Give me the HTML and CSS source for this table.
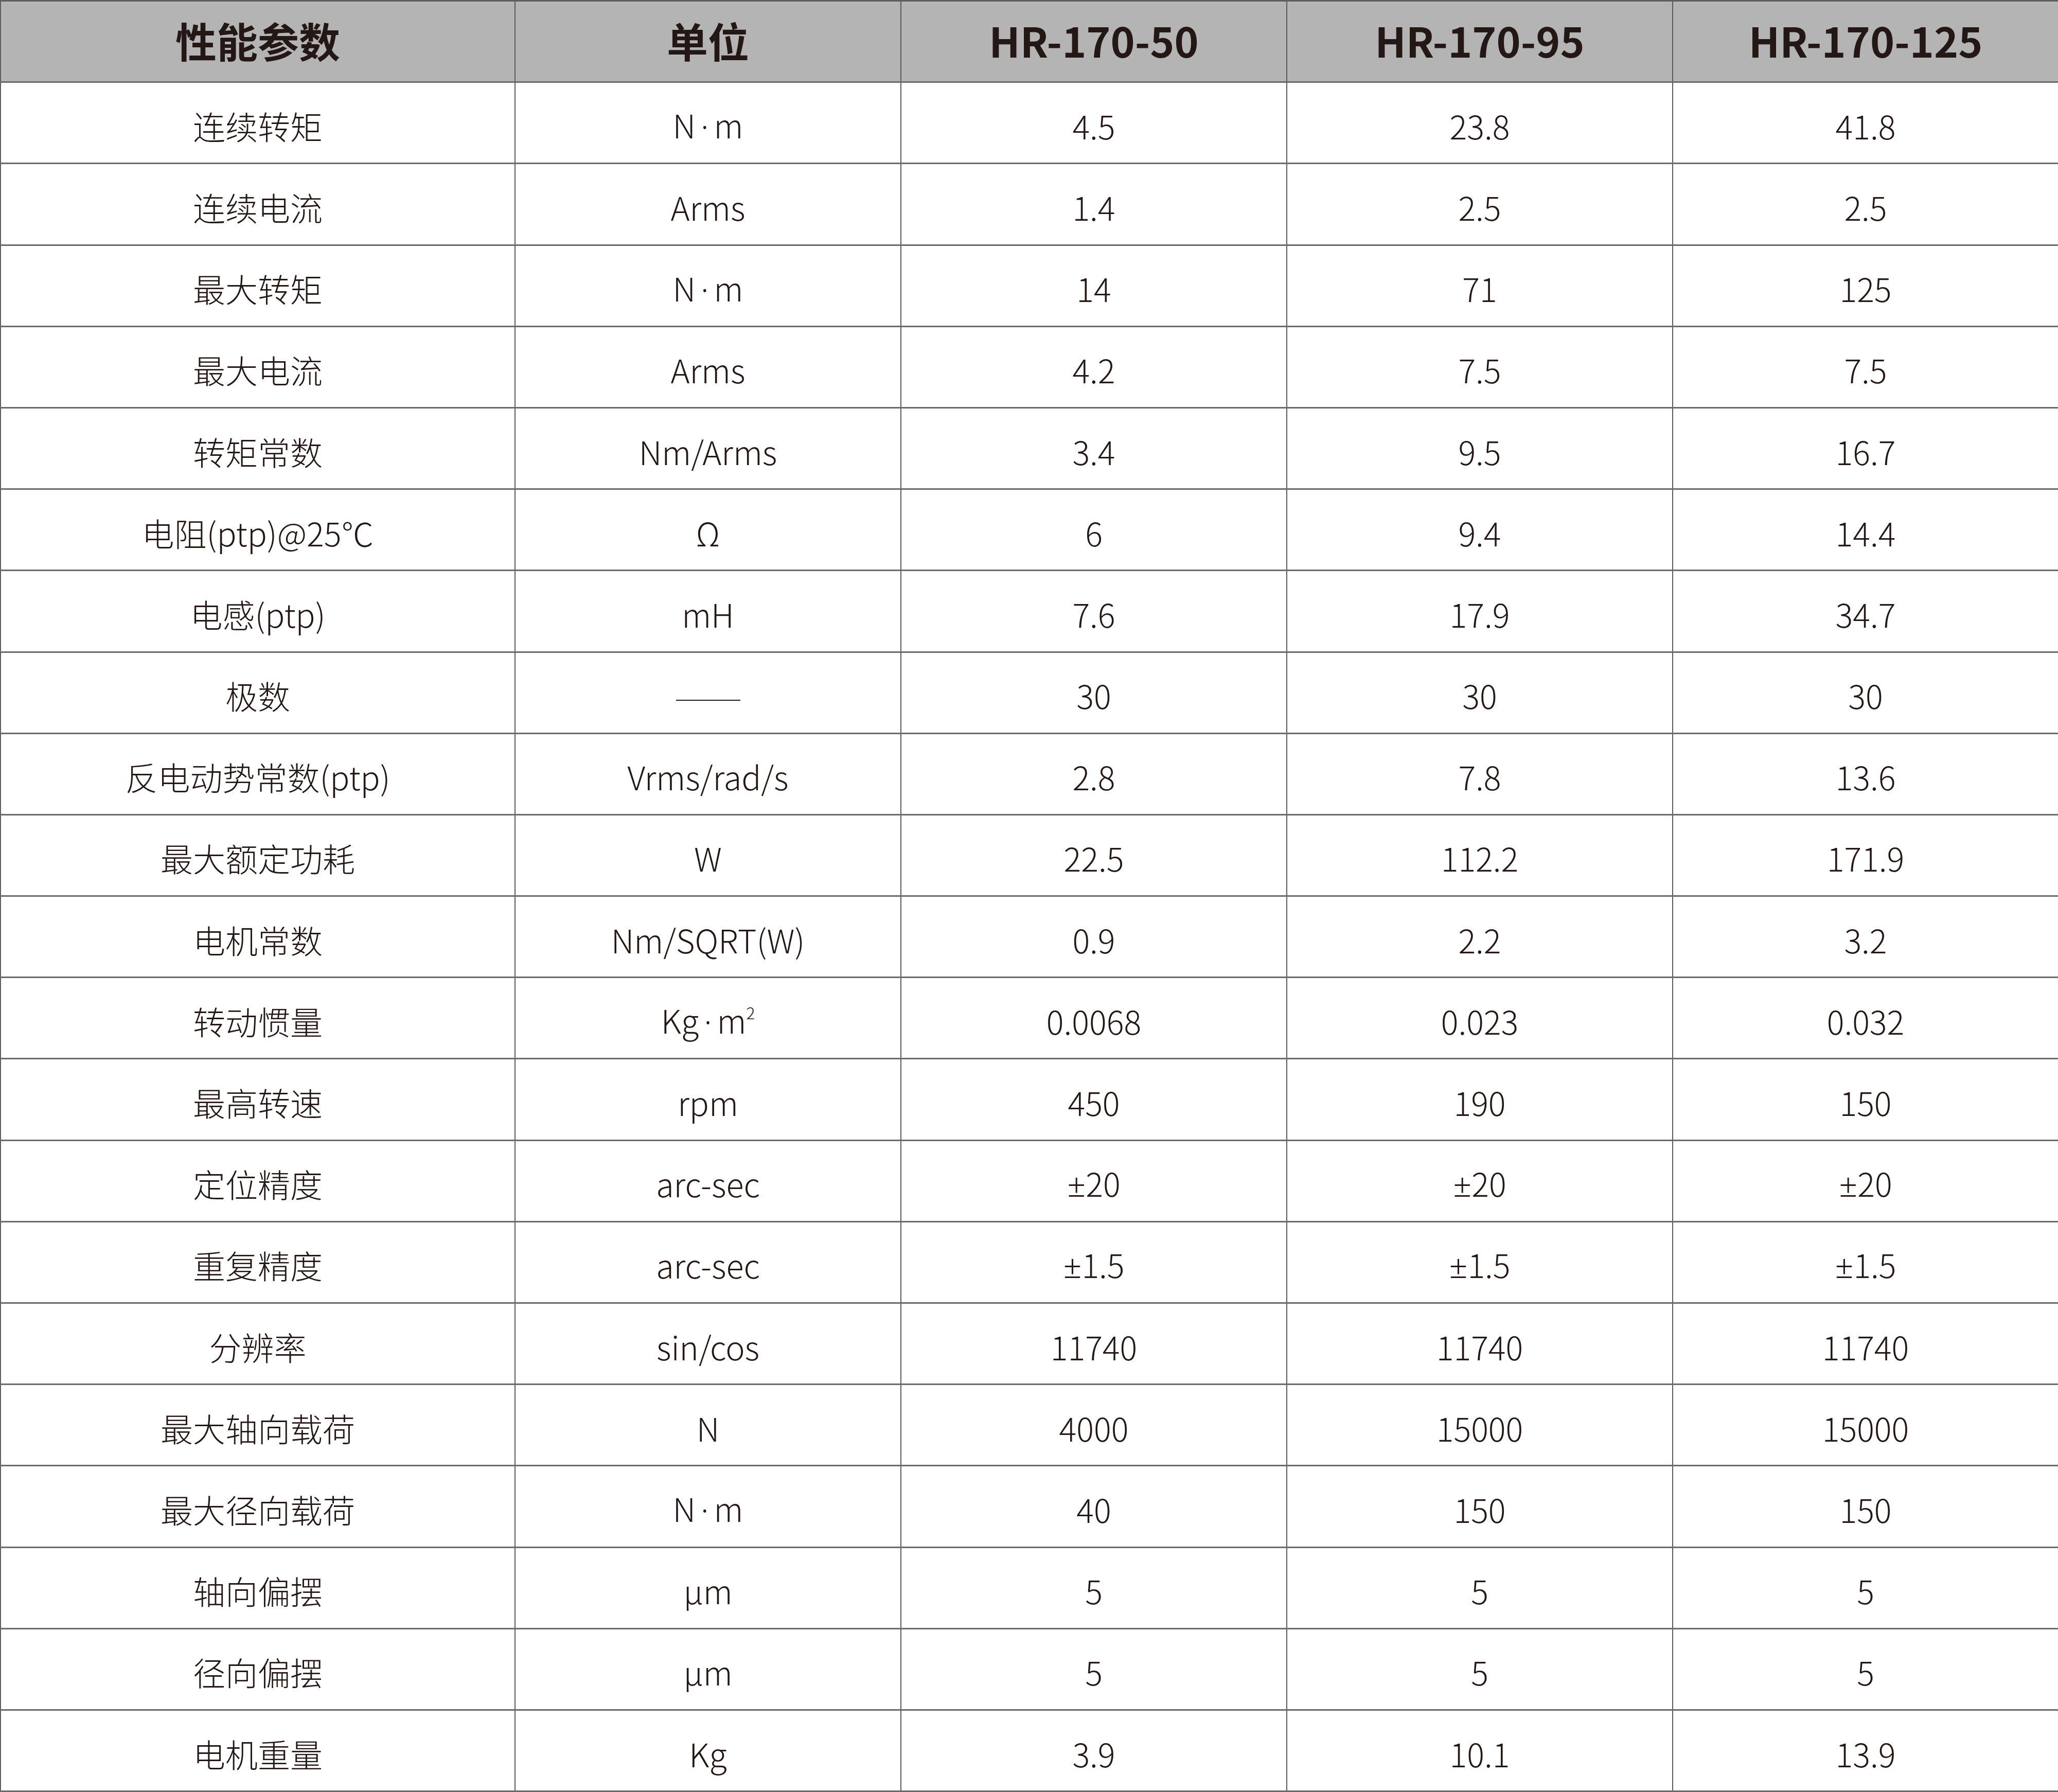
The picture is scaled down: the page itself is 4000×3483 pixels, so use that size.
FILE: index.html
```html
<!DOCTYPE html>
<html lang="zh-CN">
<head>
<meta charset="utf-8">
<title>性能参数</title>
<link rel="stylesheet" href="styles.css">
</head>
<body>
<table class="spec">
<colgroup>
<col class="c-param"><col class="c-unit"><col class="c-model"><col class="c-model"><col class="c-model">
</colgroup>
<thead>
<tr><th>性能参数</th><th>单位</th><th>HR-170-50</th><th>HR-170-95</th><th>HR-170-125</th></tr>
</thead>
<tbody>
<tr><td>连续转矩</td><td>N<span class="dot">·</span>m</td><td>4.5</td><td>23.8</td><td>41.8</td></tr>
<tr><td>连续电流</td><td>Arms</td><td>1.4</td><td>2.5</td><td>2.5</td></tr>
<tr><td>最大转矩</td><td>N<span class="dot">·</span>m</td><td>14</td><td>71</td><td>125</td></tr>
<tr><td>最大电流</td><td>Arms</td><td>4.2</td><td>7.5</td><td>7.5</td></tr>
<tr><td>转矩常数</td><td>Nm/Arms</td><td>3.4</td><td>9.5</td><td>16.7</td></tr>
<tr><td>电阻(ptp)@25℃</td><td>Ω</td><td>6</td><td>9.4</td><td>14.4</td></tr>
<tr><td>电感(ptp)</td><td>mH</td><td>7.6</td><td>17.9</td><td>34.7</td></tr>
<tr><td>极数</td><td><span class="dash"></span></td><td>30</td><td>30</td><td>30</td></tr>
<tr><td>反电动势常数(ptp)</td><td>Vrms/rad/s</td><td>2.8</td><td>7.8</td><td>13.6</td></tr>
<tr><td>最大额定功耗</td><td>W</td><td>22.5</td><td>112.2</td><td>171.9</td></tr>
<tr><td>电机常数</td><td>Nm/SQRT(W)</td><td>0.9</td><td>2.2</td><td>3.2</td></tr>
<tr><td>转动惯量</td><td>Kg<span class="dot">·</span>m<sup>2</sup></td><td>0.0068</td><td>0.023</td><td>0.032</td></tr>
<tr><td>最高转速</td><td>rpm</td><td>450</td><td>190</td><td>150</td></tr>
<tr><td>定位精度</td><td>arc-sec</td><td><span class="pm">±</span>20</td><td><span class="pm">±</span>20</td><td><span class="pm">±</span>20</td></tr>
<tr><td>重复精度</td><td>arc-sec</td><td><span class="pm">±</span>1.5</td><td><span class="pm">±</span>1.5</td><td><span class="pm">±</span>1.5</td></tr>
<tr><td>分辨率</td><td>sin/cos</td><td>11740</td><td>11740</td><td>11740</td></tr>
<tr><td>最大轴向载荷</td><td>N</td><td>4000</td><td>15000</td><td>15000</td></tr>
<tr><td>最大径向载荷</td><td>N<span class="dot">·</span>m</td><td>40</td><td>150</td><td>150</td></tr>
<tr><td>轴向偏摆</td><td>μm</td><td>5</td><td>5</td><td>5</td></tr>
<tr><td>径向偏摆</td><td>μm</td><td>5</td><td>5</td><td>5</td></tr>
<tr><td>电机重量</td><td>Kg</td><td>3.9</td><td>10.1</td><td>13.9</td></tr>
</tbody>
</table>
</body>
</html>
```
FILE: styles.css
```css
html, body {
  margin: 0;
  padding: 0;
  background: #ffffff;
}
body {
  width: 4000px;
  height: 3483px;
  overflow: hidden;
  font-family: "Noto Sans CJK SC", "Noto Sans", sans-serif;
  color: #231815;
}
.spec {
  width: 4000px;
  table-layout: fixed;
  border-collapse: collapse;
  border-top: 3px solid #5e5e5e;
  border-left: 2px solid #5e5e5e;
}
.c-param { width: 1000px; }
.c-unit { width: 750px; }
.c-model { width: 750px; }
.spec th,
.spec td {
  height: 158.2px;
  padding: 0;
  text-align: center;
  vertical-align: middle;
  border-right: 2px solid #5a5a5a;
  border-bottom: 3px solid #6a6a6a;
  line-height: 1;
  box-sizing: border-box;
}
.spec th {
  background: #b4b4b5;
  font-size: 80px;
  font-weight: 700;
  padding-bottom: 8px;
}
.spec td {
  font-size: 63px;
  font-weight: 300;
  padding-top: 9px;
}
.spec sup {
  font-size: 0.5em;
  line-height: 0;
  vertical-align: 0.9em;
}
.dot {
  font-family: "Noto Sans", "Liberation Sans", sans-serif;
  margin: 0 10px;
}
.pm {
  font-family: "Noto Sans", "Liberation Sans", sans-serif;
  font-weight: 300;
}
.dash {
  display: inline-block;
  width: 125px;
  height: 0;
  border-top: 2px solid #231815;
  vertical-align: middle;
}
```
